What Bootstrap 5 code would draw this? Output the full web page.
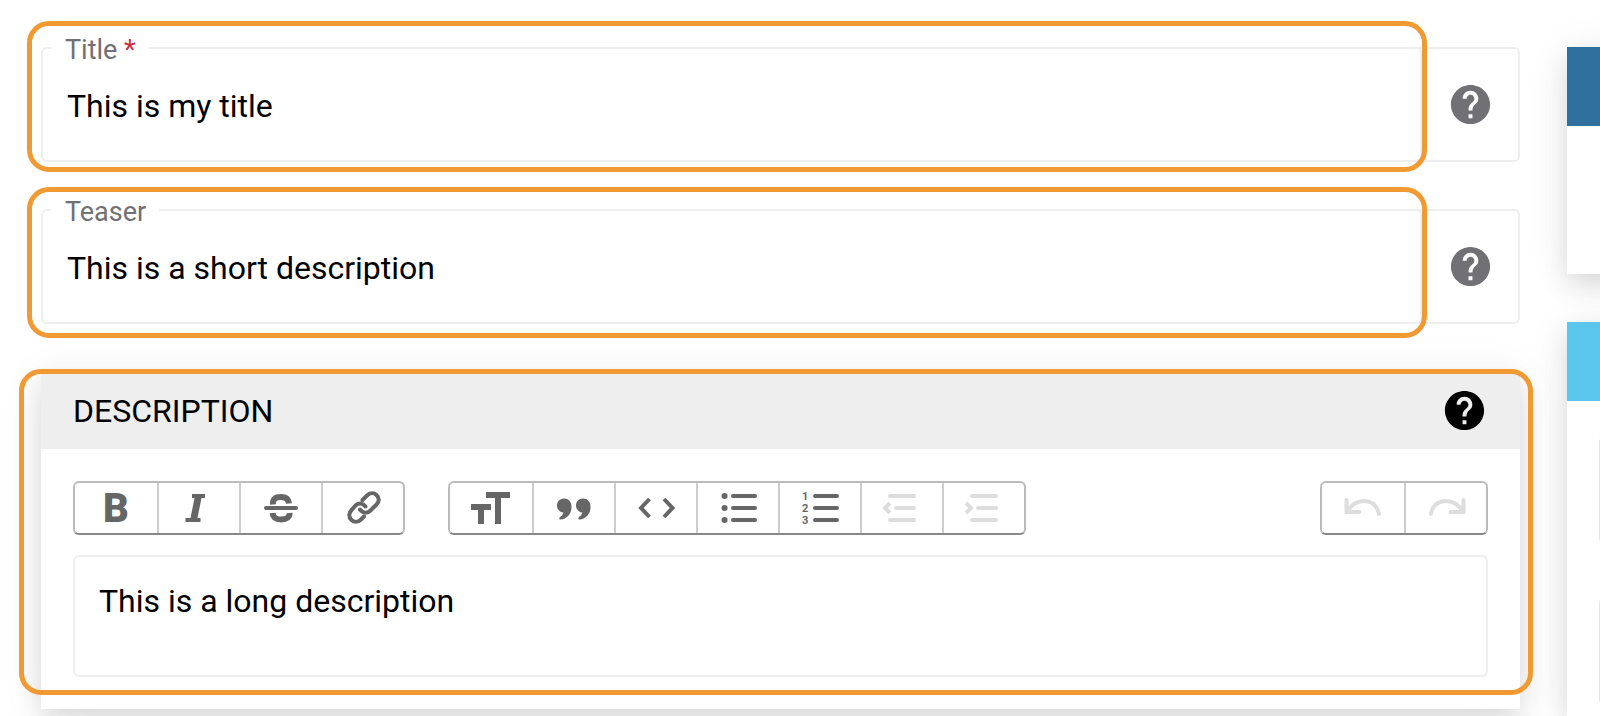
<!DOCTYPE html>
<html lang="en">
<head>
<meta charset="utf-8">
<meta name="viewport" content="width=device-width, initial-scale=1">
<title>Edit content</title>
<link rel="stylesheet" href="https://cdn.jsdelivr.net/npm/bootstrap@5.3.0/dist/css/bootstrap.min.css">
<style>
  body { font-family: Roboto, sans-serif; font-size: 32px; color: #000; background: #fff; overflow-x: hidden; }
  main { padding: 32px 0 0 41px; min-width: 0; }
  .page { overflow: hidden; }
  .side { flex: 0 0 33px; min-width: 0; margin-left: 47px; padding-top: 47px; }
  .raised { box-shadow: 0 4px 40px rgba(0,0,0,.08), 0 12px 24px rgba(0,0,0,.1); background: #fff; }

  /* outlined form field with a notched label */
  .field { margin-bottom: 32px; }
  .field fieldset { border: 2px solid #eee; border-radius: 6px; padding: 0 8px; height: 130px; min-width: 0; }
  .field legend { font-size: 27px; line-height: 28px; padding: 4px 13px 0 14px; color: #717074; }
  .field input { font-size: 32px; line-height: 40px; padding: 22px 16px 16px; color: #000; }
  .field input:focus { box-shadow: none; }
  .help-cell { width: 104px; margin: 15px 0 0 -6px; padding-left: 6px; border: 2px solid #eee; border-left: 0; border-radius: 0 6px 6px 0; color: #717074; }
  .help-btn { line-height: 0; color: inherit; }
  .help-btn svg { width: 47px; height: 47px; fill: currentColor; }
  .star { color: #c9303e; }

  /* highlight frames laid over the form */
  .frame { position: absolute; border: 5px solid #f19a33; border-radius: 22px; pointer-events: none; z-index: 2; }
  .frame-title { inset: -11px 93px -10px -14px; }
  .frame-teaser { inset: -7px 93px -14px -14px; }
  .frame-body { inset: -3px -13px 14px -22px; }

  .panel { margin-top: 48px; }
  .panel-head { background: #eee; height: 77px; padding: 0 32px; }
  .panel-head h2 { font-size: 32px; line-height: 40px; font-weight: 400; }
  .panel-body { padding: 32px; }
  .toolbar { gap: 43px; margin-bottom: 20px; }
  .tools { border: 2px solid #bbb; border-bottom-color: #888; border-radius: 6px; }
  .tools button { width: 82px; height: 50px; padding: 0; border: 0; background: none; color: #666; }
  .tools button + button { border-left: 2px solid #ccc; }
  .tools button:disabled { color: #ddd; }
  .tools svg { display: block; width: 40px; height: 40px; margin: 0 auto; overflow: visible; fill: none; stroke: currentColor; stroke-width: 4; stroke-linecap: round; }
  .tools .solid, .tools text { fill: currentColor; stroke: none; }
  .tools text { font-weight: 700; }
  .tools .heavy { font-weight: 900; }
  .editor { height: 122px; border: 2px solid #eee; border-radius: 6px; padding: 24px; font-size: 32px; line-height: 40px; resize: none; color: #000; }

  .side-card { width: 400px; }
  .side-head { height: 79px; }
  .side-blue { background: #2f709f; }
  .side-sky { background: #5bc6ec; }
  .side-body { height: 148px; }
  .side-fields { padding: 35px 32px 0; }
  .side-box { height: 108px; border: 2px solid #e4e4e4; border-radius: 6px; }
  .side-box + .side-box { margin-top: 53px; }
</style>
</head>
<body>
<svg class="d-none" aria-hidden="true">
  <symbol id="help" viewBox="0 0 24 24"><path d="M12 2C6.48 2 2 6.48 2 12s4.480 10 10 10 10-4.480 10-10S17.520 2 12 2zm1 17h-2v-2h2v2zm2.070-7.750l-.9.920C13.450 12.900 13 13.500 13 15h-2v-.5c0-1.100.45-2.100 1.170-2.830l1.240-1.260c.37-.36.59-.86.59-1.410 0-1.100-.9-2-2-2s-2 .9-2 2H8c0-2.210 1.790-4 4-4s4 1.790 4 4c0 .88-.36 1.680-.93 2.250z"/></symbol>
</svg>
<div class="page d-flex min-vh-100">
  <main class="flex-grow-1">
    <div class="field d-flex position-relative">
      <fieldset class="flex-grow-1">
        <legend class="float-none w-auto mb-0"><label for="title">Title <span class="star">*</span></label></legend>
        <input id="title" type="text" class="form-control border-0 bg-transparent" value="This is my title" required>
      </fieldset>
      <div class="help-cell d-flex align-items-center justify-content-center">
        <button type="button" class="help-btn btn p-0 border-0" aria-label="Help for title"><svg><use href="#help"/></svg></button>
      </div>
      <div class="frame frame-title"></div>
    </div>

    <div class="field d-flex position-relative">
      <fieldset class="flex-grow-1">
        <legend class="float-none w-auto mb-0"><label for="teaser">Teaser</label></legend>
        <input id="teaser" type="text" class="form-control border-0 bg-transparent" value="This is a short description">
      </fieldset>
      <div class="help-cell d-flex align-items-center justify-content-center">
        <button type="button" class="help-btn btn p-0 border-0" aria-label="Help for teaser"><svg><use href="#help"/></svg></button>
      </div>
      <div class="frame frame-teaser"></div>
    </div>

    <section class="panel raised position-relative">
      <div class="panel-head d-flex align-items-center justify-content-between">
        <h2 class="mb-0" id="desc-label">DESCRIPTION</h2>
        <button type="button" class="help-btn btn p-0 border-0" aria-label="Help for description"><svg><use href="#help"/></svg></button>
      </div>
      <div class="panel-body">
        <div class="toolbar d-flex">
          <div class="tools d-flex" role="group" aria-label="Text">
            <button type="button" aria-label="Bold"><svg viewBox="0 0 40 40"><text class="heavy" x="7" y="34" font-size="40">B</text></svg></button>
            <button type="button" aria-label="Italic"><svg viewBox="0 0 40 40"><path class="solid" d="M13 6h13v4h-3.500l-4 20h3v4H6.500v-4H11.500l4-20H13z"/></svg></button>
            <button type="button" aria-label="Strikethrough"><svg viewBox="0 0 40 40"><path d="M5 20H35"/><path stroke-width="6" stroke-linecap="butt" d="M12 16.500C11.500 11 14.500 9 20 9C25 9 27.500 11 28 15.500M11.500 25C12 29 15 31.500 20 31.500C26 31.500 29 29 28.500 25"/></svg></button>
            <button type="button" aria-label="Link"><svg viewBox="0 0 40 40"><path d="M19.500 12L24 7.500C27 4.500 31 4.500 33.500 7C36.500 10 36.500 13.500 33.500 16.500L27.500 22.500C24.500 25.500 20 25.500 17 21.500M22.500 18.500C20 15 15.500 14.500 12.500 17.500L9 21.500C5.500 25 5.500 29 8.500 32C11 34.500 15 34.500 18 31.500L21 28.500"/></svg></button>
          </div>
          <div class="tools d-flex" role="group" aria-label="Blocks">
            <button type="button" aria-label="Heading"><svg viewBox="0 0 40 40"><path class="solid" d="M15 4h24v6h-9v26h-6V10h-9zM0 16h20v6h-7v14H7V22H0z"/></svg></button>
            <button type="button" aria-label="Quote"><svg viewBox="0 0 40 40"><path class="solid" d="M10 10.500c4.500 0 7.500 3 7.500 8.500 0 7-4.500 12-11 12.500-1.500 0-1.500-1.500-.5-2.500 2-1.500 3-3 3.500-4.500C6 24.500 3 21.500 3 17.500c0-4 3-7 7-7zM29 10.500c4.500 0 7.500 3 7.500 8.500 0 7-4.500 12-11 12.500-1.500 0-1.500-1.500-.5-2.500 2-1.500 3-3 3.500-4.500C25 24.500 22 21.500 22 17.500c0-4 3-7 7-7z"/></svg></button>
            <button type="button" aria-label="Code"><svg viewBox="0 0 40 40"><path stroke-linecap="butt" d="M13.500 11L5 20L13.500 29M28 11L36.500 20L28 29"/></svg></button>
            <button type="button" aria-label="Bullets"><svg viewBox="0 0 40 40"><path d="M15 8H37M15 20H37M15 32H37"/><path stroke-width="6" d="M6.500 8h.1M6.500 20h.1M6.500 32h.1"/></svg></button>
            <button type="button" aria-label="Numbers"><svg viewBox="0 0 40 40"><path d="M15 8H37M15 20H37M15 32H37"/><text x="2" y="12" font-size="11">1</text><text x="2" y="24" font-size="11">2</text><text x="2" y="36" font-size="11">3</text></svg></button>
            <button type="button" disabled aria-label="Decrease level"><svg viewBox="0 0 40 40"><path d="M8 8H32M14 20H32M8 32H32"/><path stroke-linecap="butt" d="M8 15L3 20L8 25"/></svg></button>
            <button type="button" disabled aria-label="Increase level"><svg viewBox="0 0 40 40"><path d="M8 8H32M14 20H32M8 32H32"/><path stroke-linecap="butt" d="M2 15L7 20L2 25"/></svg></button>
          </div>
          <div class="tools d-flex ms-auto" role="group" aria-label="History">
            <button type="button" disabled aria-label="Undo"><svg viewBox="0 0 40 40"><path d="M3.500 12V24H16.500M4.500 23C9 16 15 13 21 13C29 13 34 18 36 26"/></svg></button>
            <button type="button" disabled aria-label="Redo"><svg viewBox="0 0 40 40"><path d="M37.500 12V24H24.500M36.500 23C32 16 26 13 20 13C12 13 6 18 5 26"/></svg></button>
          </div>
        </div>
        <textarea class="editor d-block w-100 overflow-hidden" aria-labelledby="desc-label">This is a long description</textarea>
      </div>
      <div class="frame frame-body"></div>
    </section>
  </main>

  <aside class="side d-flex flex-column">
    <div class="side-card raised mb-5">
      <div class="side-head side-blue"></div>
      <div class="side-body"></div>
    </div>
    <div class="side-card raised flex-grow-1">
      <div class="side-head side-sky"></div>
      <div class="side-fields">
        <div class="side-box"></div>
        <div class="side-box"></div>
      </div>
    </div>
  </aside>
</div>
<script src="https://cdn.jsdelivr.net/npm/bootstrap@5.3.0/dist/js/bootstrap.bundle.min.js"></script>
</body>
</html>
